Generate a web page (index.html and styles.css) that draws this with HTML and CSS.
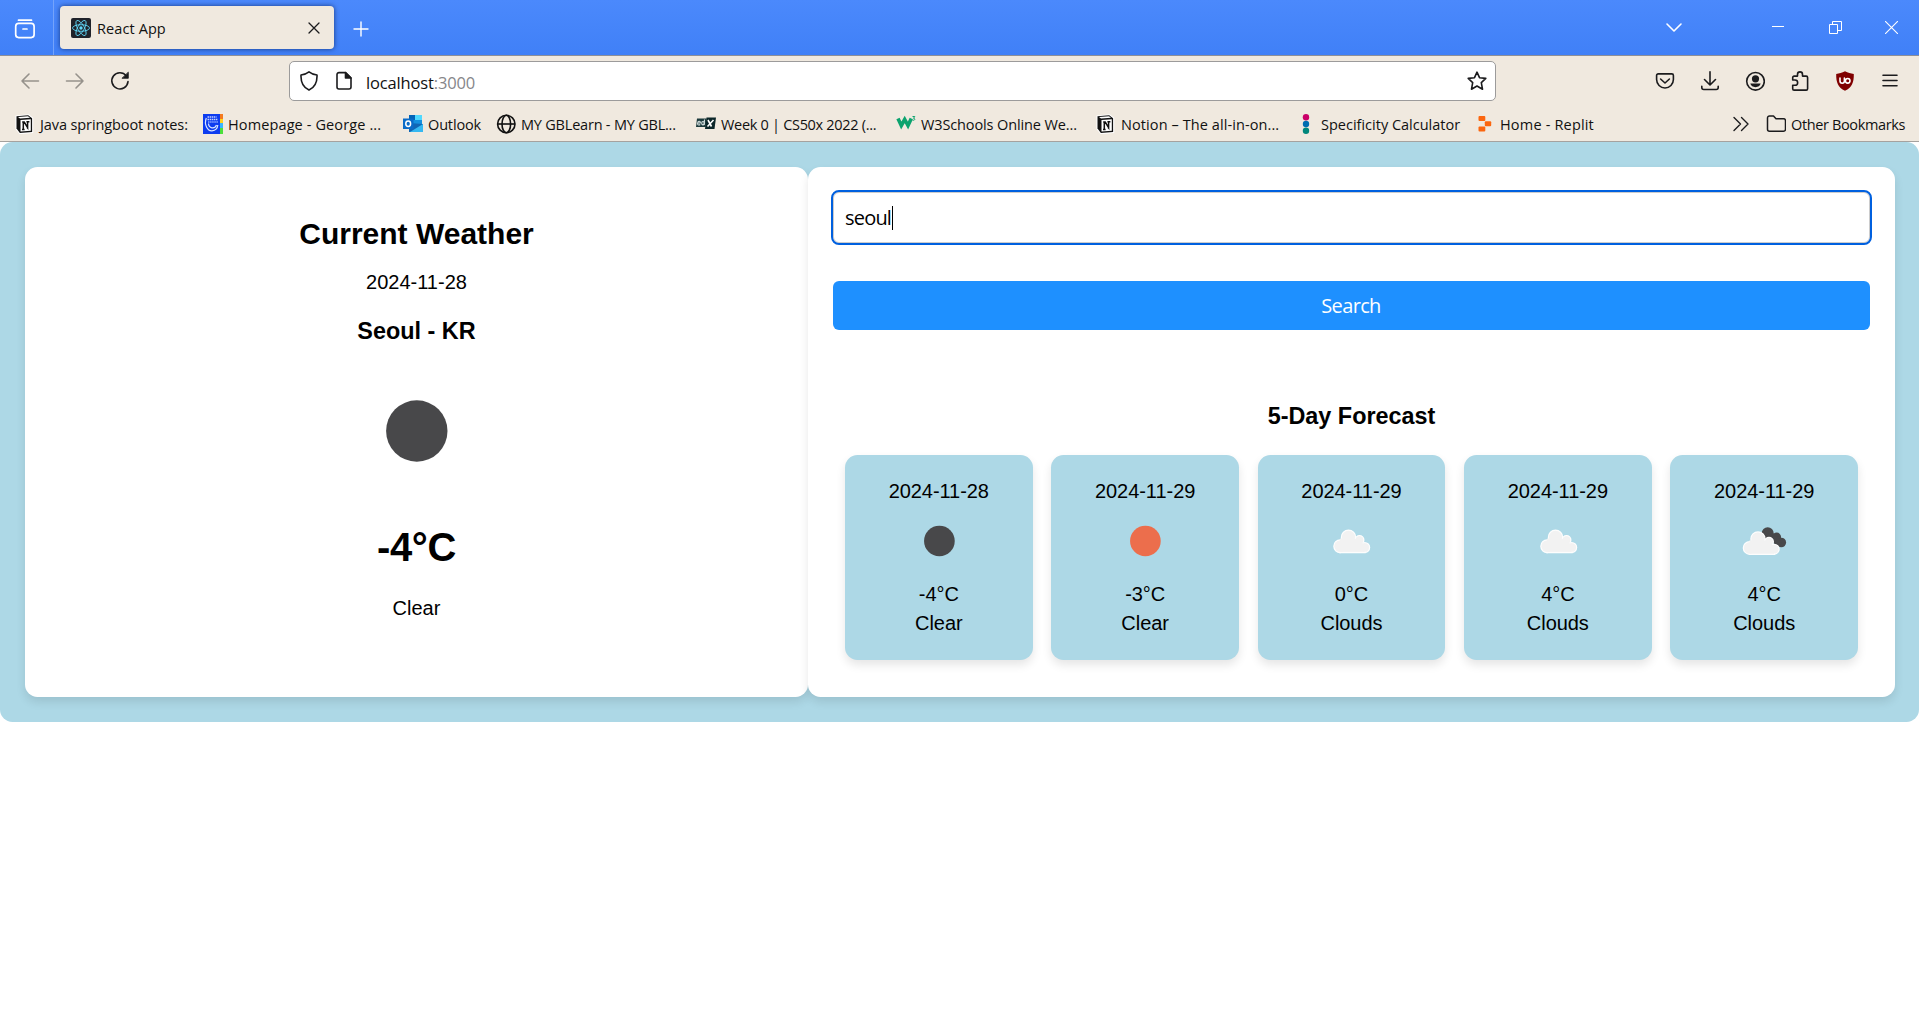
FILE: index.html
```html
<!DOCTYPE html>
<html lang="en">
<head>
<meta charset="utf-8">
<title>React App</title>
<link rel="stylesheet" href="styles.css">
</head>
<body>
<svg class="defs" aria-hidden="true">
  <symbol id="notion" viewBox="0 0 20 20">
    <path d="M1.200 2.200 13.500 1l4 3v14.400L5 19.400l-3.800-4.600z" fill="#fff" stroke="#fff" stroke-width="1.500"/>
    <path d="M1.500 2.300 13.200 1.300l3.900 2.900v13.900L4.900 19 1.500 14.600z" fill="#111"/>
    <path d="M3 3l10-.8 2 1.500L5 4.500z" fill="#fff"/>
    <path d="M5.500 6l10.300-.7v11.400l-10.300.8z" fill="#fff"/>
    <path d="M7.200 8h2l3.400 5.500V8.300M8.300 8.300v7.200M7 15.500h2.600M11.400 7.800h3M12.600 14.800V8" fill="none" stroke="#111" stroke-width="1.500"/>
  </symbol>
  <symbol id="moon" viewBox="0 0 125 125"><circle cx="62.800" cy="62" r="30.700" fill="#48484a"/></symbol>
  <symbol id="sun" viewBox="0 0 125 125"><circle cx="62.800" cy="62" r="30.700" fill="#ec6e4c"/></symbol>
  <symbol id="cloud" viewBox="0 0 125 125">
    <g fill="#f2f2f2" stroke="#fdfdfd" stroke-width="3">
      <circle cx="57" cy="54.500" r="14"/><circle cx="40.300" cy="72.500" r="12.400"/><circle cx="79" cy="60" r="8.500"/><circle cx="89.500" cy="75" r="9.500"/><path d="M40 72h50v12.900H40z"/>
    </g>
    <g fill="#f2f2f2"><circle cx="57" cy="54.500" r="13"/><circle cx="40.300" cy="72.500" r="11.400"/><circle cx="79" cy="60" r="7.500"/><circle cx="89.500" cy="75" r="8.300"/><path d="M40 57h17l22 1 10 14v11.500H40z"/></g>
  </symbol>
  <symbol id="clouds" viewBox="0 0 125 125">
    <g fill="#48484a"><circle cx="69.400" cy="46.500" r="12"/><circle cx="87.400" cy="54" r="8.800"/><circle cx="96.500" cy="65" r="9.700"/><path d="M70 47h17l10 20-10 8z"/></g>
    <use href="#cloud" x="-7" y="3.400" width="125" height="125"/>
  </symbol>
</svg>

<header class="browser">
  <div class="tabbar">
    <div class="view-btn"><svg width="22" height="22" viewBox="0 0 22 22" fill="none" stroke="#fff" stroke-width="1.700" stroke-linecap="round"><path d="M4.500 2.200h13"/><rect x="1.700" y="5.400" width="18.400" height="14.200" rx="3"/><path d="M9 11h4"/></svg></div>
    <div class="tab">
      <svg width="20" height="20" viewBox="0 0 20 20"><rect width="20" height="20" rx="2" fill="#20232a"/><g fill="none" stroke="#61dafb" stroke-width=".85"><ellipse cx="10" cy="10" rx="8.500" ry="3.300"/><ellipse cx="10" cy="10" rx="8.500" ry="3.300" transform="rotate(60 10 10)"/><ellipse cx="10" cy="10" rx="8.500" ry="3.300" transform="rotate(120 10 10)"/></g><circle cx="10" cy="10" r="1.700" fill="#61dafb"/></svg>
      <span class="tab-title">React App</span>
      <svg width="12" height="12" viewBox="0 0 12 12" stroke="#1b1b1d" stroke-width="1.300" stroke-linecap="round"><path d="m1 1 10 10M11 1 1 11"/></svg>
    </div>
    <svg class="new-tab" width="16" height="16" viewBox="0 0 16 16" stroke="#fff" stroke-width="1.400" stroke-linecap="round"><path d="M8 1v14M1 8h14"/></svg>
    <div class="all-tabs"><svg width="18" height="12" viewBox="0 0 18 12" fill="none" stroke="#fff" stroke-width="1.600" stroke-linecap="round" stroke-linejoin="round"><path d="m2 2 7 7 7-7"/></svg></div>
    <div class="win min"><svg width="12" height="1" viewBox="0 0 12 1"><path d="M0 0h12v1H0z" fill="#fff"/></svg></div>
    <div class="win"><svg width="13" height="13" viewBox="0 0 13 13" fill="none" stroke="#fff"><path d="M.5 3.500h8v9h-8zM3.500 3V.5h9v9H9"/></svg></div>
    <div class="win close"><svg width="13" height="13" viewBox="0 0 13 13" stroke="#fff" stroke-width="1.100"><path d="m0 0 13 13M13 0 0 13"/></svg></div>
  </div>

  <div class="toolbar">
    <div class="tool muted"><svg width="20" height="20" viewBox="0 0 20 20"><path d="M18.500 10H2M9 3l-7 7 7 7"/></svg></div>
    <div class="tool muted"><svg width="20" height="20" viewBox="0 0 20 20"><path d="M1.500 10H18M11 3l7 7-7 7"/></svg></div>
    <div class="tool"><svg width="20" height="20" viewBox="0 0 20 20"><path d="M16.300 4.800A8.100 8.100 0 1 0 18 10.600"/><path d="M18.300 1.500v5.800h-6z" fill="#1b1b1d" stroke-width=".8"/></svg></div>
    <div class="urlbar">
      <svg class="shield" width="20" height="20" viewBox="0 0 20 20"><path d="M10 .9c2.600 2 5.200 3 8 3.100.3 6.600-1.700 12.200-8 15.100-6.300-2.900-8.300-8.500-8-15.100C4.800 3.900 7.400 2.900 10 .9z"/></svg>
      <svg class="page" width="16" height="20" viewBox="0 0 16 20"><path d="M3 1.600h6.500L15 7v9a2 2 0 0 1-2 2H3a2 2 0 0 1-2-2V3.600a2 2 0 0 1 2-2z"/><path d="M9.500 1.600V7H15z" fill="#1b1b1d"/></svg>
      <span class="host">localhost<span class="port">:3000</span></span>
      <svg class="star" width="20" height="20" viewBox="0 0 20 20"><path d="m10 1.200 2.500 5.500 6.300.7-4.500 4.200 1.200 6.600-5.500-3.200-5.500 3.200 1.200-6.600-4.500-4.200 6.300-.7z"/></svg>
    </div>
    <div class="tool first"><svg width="20" height="20" viewBox="0 0 20 20"><path d="M3.200 2.900h13.600a1.600 1.600 0 0 1 1.600 1.600v4.100a8.400 8.400 0 0 1-16.800 0V4.500a1.600 1.600 0 0 1 1.600-1.600z"/><path d="m5.600 8 4.400 4 4.400-4"/></svg></div>
    <div class="tool"><svg width="20" height="20" viewBox="0 0 20 20"><path d="M10 .8v13M4.500 8.500 10 14l5.500-5.500M1.800 15.300v1.200a2 2 0 0 0 2 2h12.400a2 2 0 0 0 2-2v-1.200"/></svg></div>
    <div class="tool"><svg width="20" height="20" viewBox="0 0 20 20"><circle cx="10.500" cy="10.300" r="8.800"/><g fill="#1b1b1d" stroke="none"><circle cx="10.500" cy="7.800" r="3.600"/><path d="M5.300 12.600h10.400c-.6 2.200-2.600 3.600-5.200 3.600s-4.600-1.400-5.200-3.600z"/></g></svg></div>
    <div class="tool"><svg width="20" height="20" viewBox="0 0 20 20"><path d="M2.700 9V6.500A1.400 1.400 0 0 1 4.100 5.100H7.500V3.400a2.500 2.500 0 0 1 5 0v1.700h3.700a1.400 1.400 0 0 1 1.400 1.400v11.200a1.400 1.400 0 0 1-1.400 1.400H4.100a1.400 1.400 0 0 1-1.400-1.400v-3.400h2.300a2.600 2.600 0 0 0 0-5.300z"/></svg></div>
    <div class="tool"><svg width="20" height="20" viewBox="0 0 20 20"><path d="M10 .3c3 1.600 5.800 2.400 8.800 2.600.2 8.400-1.800 13.400-8.800 16.800C3 16.300 1 11.300 1.200 2.900 4.200 2.700 7 1.900 10 .3z" fill="#800000" stroke="none"/><path d="M5 7v3a2.200 2.200 0 0 0 4.400 0V7" stroke="#fff"/><circle cx="12.700" cy="9.800" r="2.300" stroke="#fff"/></svg></div>
    <div class="tool"><svg width="20" height="20" viewBox="0 0 20 20"><path d="M3 4.200h14M3 9.500h14M3 14.800h14"/></svg></div>
  </div>

  <nav class="bookmarks">
    <a class="bm bm-java"><svg width="20" height="20"><use href="#notion"/></svg><span>Java springboot notes:</span></a>
    <a class="bm bm-home"><svg width="20" height="20" viewBox="0 0 20 20"><path d="M0 0h17v20H0z" fill="#0d3cf0"/><path d="M17 0h3v5h-3z" fill="#f47b20"/><path d="M17 5h3v4h-3z" fill="#ffd21e"/><path d="M17 9h3v5h-3z" fill="#38b6ff"/><path d="M17 14h3v6h-3z" fill="#4be03a"/><path d="M4.500 3h9M4.500 5.500h10" stroke="#c3d0ff" stroke-width="1.600" stroke-dasharray="1.500 .6"/><path d="M5 8h10" stroke="#8fa9ff" stroke-width="1.500" stroke-dasharray="1.500 .6"/><path d="M3.300 4C.8 10.500 4.500 17 9 16.800c3.500-.2 5.500-2.500 5.800-5.800" fill="none" stroke="#dbe6ff" stroke-width="1.200"/><path d="M5.500 9.500c.3 5 6 6 8 1.500" fill="none" stroke="#dbe6ff" stroke-width="1.200"/></svg><span>Homepage - George ...</span></a>
    <a class="bm bm-outlook"><svg width="20" height="20" viewBox="0 0 20 20"><path d="M6 1h13v10H6z" fill="#1490df"/><path d="M12 1h7v5h-7z" fill="#50d9ff"/><path d="M6 1h6v5H6z" fill="#0364b8"/><path d="M6 9l14 1v8H6z" fill="#1066b5"/><path d="M20 10v8H7z" fill="#35b8f1"/><path d="M0 4.500h10.500v10.500H0z" fill="#0a6bc8"/><ellipse cx="5.200" cy="9.800" rx="2.400" ry="2.700" fill="none" stroke="#fff" stroke-width="1.500"/></svg><span>Outlook</span></a>
    <a class="bm bm-learn"><svg width="20" height="20" viewBox="0 0 20 20" fill="none" stroke="#111" stroke-width="1.600"><circle cx="10.300" cy="10" r="8.700"/><ellipse cx="10.300" cy="10" rx="4.300" ry="8.700"/><path d="M1.600 10h17.400"/></svg><span>MY GBLearn - MY GBL...</span></a>
    <a class="bm bm-week"><svg width="20" height="20" viewBox="0 0 20 20"><path d="M1 4.500h9.500l-.8 8.500H0z" fill="#1c3a3c"/><path d="M10.500 3.500H20l-1.500 11.500H9z" fill="#0b2629"/><g fill="none" stroke="#d7e2e2" stroke-width="1.100"><path d="M1.600 9h2.700c.4-2.700-2.700-2-2.700.4 0 2 1.800 1.800 2.600 1.100"/><ellipse cx="7" cy="9.200" rx="1.300" ry="1.700"/><path d="M8.500 5.500 8.100 11"/></g><path d="m12 6 3.500 6.500M17.500 6l-6 6.500" stroke="#fff" stroke-width="1.600"/></svg><span>Week 0 | CS50x 2022 (...</span></a>
    <a class="bm bm-w3"><svg width="20" height="20" viewBox="0 0 20 20" fill="none" stroke="#0ba36e"><path d="m2 4.500 3.300 7 3.400-6 3.300 6 3.300-7" stroke-width="3.600"/><path d="M16.500 2.500h2.300l-1.300 1.800c1.700-.2 2 2.200-.8 2" stroke-width="1"/></svg><span>W3Schools Online We...</span></a>
    <a class="bm bm-notion"><svg width="20" height="20"><use href="#notion"/></svg><span>Notion – The all-in-on...</span></a>
    <a class="bm bm-spec"><svg width="20" height="20" viewBox="0 0 20 20"><circle cx="10" cy="3.200" r="3.200" fill="#cb0069"/><circle cx="10" cy="10" r="3.200" fill="#006db0"/><circle cx="10" cy="16.800" r="3.200" fill="#00877c"/></svg><span>Specificity Calculator</span></a>
    <a class="bm bm-replit"><svg width="20" height="20" viewBox="0 0 20 20" fill="#fb660f"><rect x="3.500" y="2" width="6.800" height="5" rx="1"/><rect x="9.800" y="7.300" width="6.400" height="5" rx="1"/><rect x="3.500" y="12.500" width="6.800" height="5" rx="1"/></svg><span>Home - Replit</span></a>
    <svg class="more" width="16" height="16" viewBox="0 0 16 16" fill="none" stroke="#1b1b1d" stroke-width="1.400" stroke-linecap="round" stroke-linejoin="round"><path d="m1 1.500 6.500 6.500L1 14.500M8.500 1.500 15 8l-6.500 6.500"/></svg>
    <a class="bm bm-other"><svg width="20" height="20" viewBox="0 0 20 20" fill="none" stroke="#1b1b1d" stroke-width="1.500" stroke-linejoin="round"><path d="M1.500 4a2 2 0 0 1 2-2h4L10 4.800h7.500a2 2 0 0 1 2 2v8.400a2 2 0 0 1-2 2h-14a2 2 0 0 1-2-2z"/></svg><span>Other Bookmarks</span></a>
  </nav>
</header>

<main class="app">
  <section class="panel current">
    <h2>Current Weather</h2>
    <p class="date">2024-11-28</p>
    <h3>Seoul - KR</h3>
    <svg class="icon-large"><use href="#moon"/></svg>
    <p class="temp">-4°C</p>
    <p class="cond">Clear</p>
  </section>
  <section class="panel side">
    <div class="search-field"><span class="query">seoul</span><span class="caret"></span></div>
    <button class="search-btn">Search</button>
    <h3>5-Day Forecast</h3>
    <div class="forecast">
      <article class="day"><p>2024-11-28</p><svg><use href="#moon"/></svg><p class="line">-4°C</p><p class="line">Clear</p></article>
      <article class="day"><p>2024-11-29</p><svg><use href="#sun"/></svg><p class="line">-3°C</p><p class="line">Clear</p></article>
      <article class="day"><p>2024-11-29</p><svg><use href="#cloud"/></svg><p class="line">0°C</p><p class="line">Clouds</p></article>
      <article class="day"><p>2024-11-29</p><svg><use href="#cloud"/></svg><p class="line">4°C</p><p class="line">Clouds</p></article>
      <article class="day"><p>2024-11-29</p><svg><use href="#clouds"/></svg><p class="line">4°C</p><p class="line">Clouds</p></article>
    </div>
  </section>
</main>
</body>
</html>
```

FILE: styles.css
```css
* { box-sizing: border-box; }

body {
  margin: 0;
  background: #fff;
  color: #000;
  font: 20px/24px "Liberation Sans", Arial, sans-serif;
  overflow: hidden;
}

h2, h3, p { margin: 0; }
svg { display: block; flex: none; }
.defs { display: none; }

/* Browser frame */
.browser {
  height: 142px;
  background: #f0e9df;
  border-bottom: 1px solid #a5a29f;
  font: 14.5px/20px "Open Sans", "Noto Sans", sans-serif;
  color: #111;
  white-space: nowrap;
}

.tabbar {
  height: 56px;
  display: flex;
  align-items: center;
  background: linear-gradient(#4b89fc, #4080f7);
  border-bottom: 1px solid #8d8f98;
}

.view-btn {
  width: 54px;
  height: 55px;
  display: flex;
  align-items: center;
  padding: 2px 0 0 14px;
  border-right: 1px solid #74a3fb;
}

.tab {
  width: 274px;
  height: 43px;
  margin-left: 6px;
  padding: 0 14px 0 11px;
  display: flex;
  align-items: center;
  background: #f0e9df;
  border-radius: 4px;
  box-shadow: 0 0 5px rgba(10, 30, 90, .75);
}

.tab-title { flex: 1; margin-left: 6px; padding-top: 2px; letter-spacing: .1px; }
.new-tab { margin: 2px 0 0 19px; }
.all-tabs { width: 40px; margin-left: auto; margin-right: 56px; display: flex; justify-content: center; }
.win { width: 57px; display: flex; justify-content: center; }
.win.min { padding: 0 2px 2px 0; }
.win.close { width: 55px; }

.toolbar {
  height: 50px;
  display: flex;
  align-items: center;
  padding: 0 7px;
}

.tool { width: 45px; display: flex; justify-content: center; }
.tool svg, .urlbar svg {
  fill: none;
  stroke: #1b1b1d;
  stroke-width: 1.6;
  stroke-linecap: round;
  stroke-linejoin: round;
}
.tool.muted svg { stroke: #96928c; }
.tool.first { margin-left: auto; }

.urlbar {
  width: 1207px;
  height: 40px;
  margin-left: 147px;
  padding: 0 8px 0 9px;
  display: flex;
  align-items: center;
  background: #fff;
  border: 1px solid #9c9b9b;
  border-radius: 5px;
}
.page { margin-left: 17px; }
.host { margin-left: 14px; padding-top: 3px; font-size: 16.5px; letter-spacing: -.15px; }
.port { color: #86868a; }
.star { margin-left: auto; }

.bookmarks {
  height: 35px;
  display: flex;
  align-items: center;
  padding: 1px 0 0 15px;
}
.bm { display: flex; align-items: center; gap: 5px; }
.bm span { padding-top: 1px; }
.bm-java { width: 188px; letter-spacing: -.1px; }
.bm-home { width: 200px; letter-spacing: .12px; }
.bm-outlook { width: 93px; letter-spacing: -.15px; }
.bm-learn { width: 200px; letter-spacing: -.21px; }
.bm-week { width: 200px; letter-spacing: -.3px; }
.bm-w3 { width: 200px; letter-spacing: -.12px; }
.bm-notion { width: 200px; letter-spacing: .09px; }
.bm-spec { width: 179px; }
.bm-replit { letter-spacing: .18px; }
.bm-other { width: 153px; letter-spacing: -.37px; }
.more { margin: 0 17px 0 auto; }

/* Weather page */
.app {
  height: 580px;
  padding: 25px 24px 25px 25px;
  display: flex;
  background: #add8e6;
  border-radius: 12.5px;
}

.panel {
  background: #fff;
  border-radius: 12.5px;
  box-shadow: 0 5px 10px rgba(0, 0, 0, .1);
  display: flex;
  flex-direction: column;
}

h2 { font-size: 30px; line-height: 34px; }
h3 { font-size: 23.4px; line-height: 28px; }

.current { width: 783px; align-items: center; padding-top: 50px; }
.current .date { margin-top: 19px; }
.current h3 { margin-top: 23px; }
.icon-large { width: 125px; height: 125px; margin-top: 24px; }
.temp { margin-top: 30px; font-size: 40px; line-height: 46px; font-weight: bold; letter-spacing: -.3px; }
.cond { margin-top: 26px; }

.side { flex: 1; padding: 25px; }

.search-field, .search-btn {
  font-family: "Open Sans", "Noto Sans", sans-serif;
  font-size: 20px;
}

.search-field {
  height: 51px;
  padding-left: 11px;
  display: flex;
  align-items: center;
  border: 1px solid #ccc;
  border-radius: 6px;
  outline: 2px solid #0060df;
}
.query { letter-spacing: -.8px; padding-top: 1px; }
.caret { width: 1px; height: 24px; background: #000; margin-left: 1px; }

.search-btn {
  height: 49px;
  margin-top: 38px;
  padding: 0 1px 0 0;
  border: 0;
  border-radius: 6px;
  background: #1e90ff;
  color: #fff;
  letter-spacing: -.65px;
}

.side h3 { margin-top: 72px; text-align: center; }

.forecast {
  margin: 25px 12px 0;
  display: grid;
  grid-template-columns: repeat(5, 1fr);
  gap: 18.75px;
}

.day {
  height: 205px;
  padding-top: 24px;
  display: flex;
  flex-direction: column;
  align-items: center;
  background: #add8e6;
  border-radius: 12.5px;
  box-shadow: 0 5px 10px rgba(0, 0, 0, .1);
}
.day p { letter-spacing: -.05px; }
.day svg { width: 62.5px; height: 62.5px; margin: 6.5px 0 7.5px; }
.line { line-height: 29.4px; }
```
